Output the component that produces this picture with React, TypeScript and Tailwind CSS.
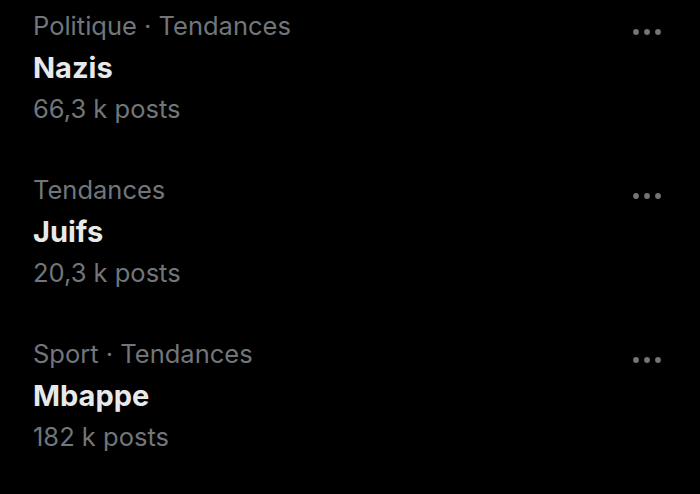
const trends = [
  { category: 'Politique · Tendances', title: 'Nazis', posts: '66,3 k posts' },
  { category: 'Tendances', title: 'Juifs', posts: '20,3 k posts' },
  { category: 'Sport · Tendances', title: 'Mbappe', posts: '182 k posts' },
];

function MoreIcon() {
  return (
    <svg width="28" height="8" viewBox="0 0 28 8" className="text-[#71767b]">
      <circle cx="3" cy="4" r="2.9" fill="currentColor" />
      <circle cx="14" cy="4" r="2.9" fill="currentColor" />
      <circle cx="25" cy="4" r="2.9" fill="currentColor" />
    </svg>
  );
}

export default function App() {
  return (
    <div
      className="w-[700px] h-[494px] bg-black overflow-hidden"
      style={{ fontFamily: 'Inter, "Noto Sans", sans-serif' }}
    >
      {trends.map((t) => (
        <div key={t.title} className="flex h-[164px] pl-[33px] pr-[39px] pt-[5px]">
          <div className="flex flex-col flex-1">
            <span className="text-[25.5px] leading-[42px] text-[#71767b]">
              {t.category}
            </span>
            <span className="text-[29px] leading-[41px] font-bold text-[#e7e9ea]">
              {t.title}
            </span>
            <span className="text-[25.5px] leading-[42px] text-[#71767b]">
              {t.posts}
            </span>
          </div>
          <div className="pt-[23px]">
            <MoreIcon />
          </div>
        </div>
      ))}
    </div>
  );
}
